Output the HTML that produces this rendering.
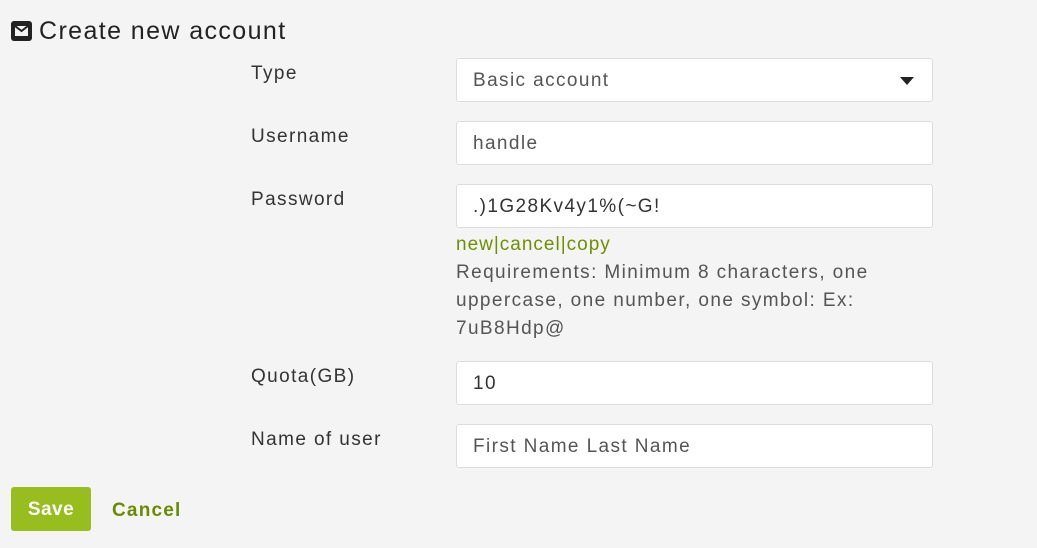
<!DOCTYPE html>
<html><head><style>
body{margin:0;background:#f4f4f4;font-family:"Liberation Sans",sans-serif;color:#333;width:1037px;height:548px;overflow:hidden;position:relative;letter-spacing:1.4px}
.a{position:absolute}
.lbl{position:absolute;left:251px;font-size:19px;color:#333}
.inp{position:absolute;left:456px;width:477px;height:44px;background:#fff;border:1px solid #ddd;border-radius:3px;box-sizing:border-box;padding-left:16px;line-height:44px;font-size:19px;color:#555}
.g{color:#6f8f00}
</style></head><body>
<svg class="a" style="left:11px;top:21px" width="21" height="20" viewBox="0 0 21 20"><rect x="0" y="0" width="21" height="20" rx="3" fill="#222"/><path d="M4 5h13v10H4z" fill="#f4f4f4"/><path d="M4 5l6.5 5 6.5-5" stroke="#222" stroke-width="2" fill="none"/></svg>
<div class="a" style="left:39px;top:17px;font-size:25px;color:#222">Create new account</div>
<div class="lbl" style="top:63px">Type</div>
<div class="inp" style="top:58px">Basic account</div>
<svg class="a" style="left:900px;top:77px" width="14" height="8"><path d="M0 0h14L7 8z" fill="#222"/></svg>
<div class="lbl" style="top:126px">Username</div>
<div class="inp" style="top:121px">handle</div>
<div class="lbl" style="top:189px">Password</div>
<div class="inp" style="top:184px;color:#333">.)1G28Kv4y1%(~G!</div>
<div class="a g" style="left:456px;top:234px;font-size:19px;letter-spacing:1px">new|cancel|copy</div>
<div class="a" style="left:456px;top:259px;font-size:19px;line-height:28px;width:450px;color:#555">Requirements: Minimum 8 characters, one uppercase, one number, one symbol: Ex: 7uB8Hdp@</div>
<div class="lbl" style="top:366px">Quota(GB)</div>
<div class="inp" style="top:361px;color:#333">10</div>
<div class="lbl" style="top:429px">Name of user</div>
<div class="inp" style="top:424px">First Name Last Name</div>
<div class="a" style="left:11px;top:487px;width:80px;height:44px;background:#97bd1e;border-radius:3px;color:#fff;font-weight:bold;font-size:19px;line-height:46px;text-align:center;letter-spacing:0.5px">Save</div>
<div class="a" style="left:112px;top:500px;font-weight:bold;font-size:19px;color:#6b8a00;letter-spacing:1.2px">Cancel</div>
</body></html>
